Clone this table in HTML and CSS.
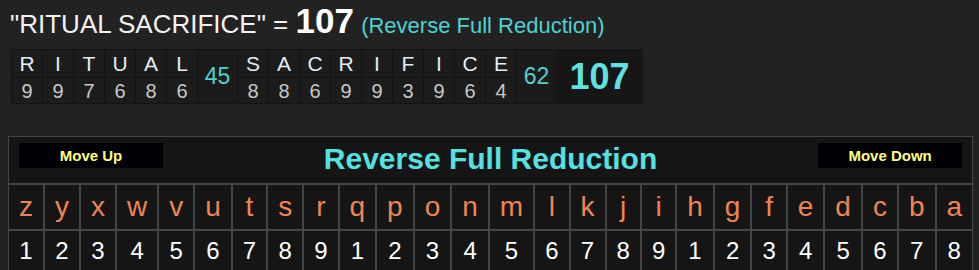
FILE: index.html
```html
<!DOCTYPE html>
<html>
<head>
<meta charset="utf-8">
<link rel="stylesheet" href="styles.css">
</head>
<body>
<div class="page">
  <div class="result"><span class="phrase">"RITUAL SACRIFICE" = </span><span class="total">107</span> <span class="cipher-name">(Reverse Full Reduction)</span></div>
  <table class="breakdown">
    <tr>
      <td class="bl">R</td><td class="bl">I</td><td class="bl">T</td><td class="bl">U</td><td class="bl">A</td><td class="bl">L</td>
      <td class="sum" rowspan="2">45</td>
      <td class="bl">S</td><td class="bl">A</td><td class="bl">C</td><td class="bl">R</td><td class="bl">I</td><td class="bl">F</td><td class="bl">I</td><td class="bl">C</td><td class="bl">E</td>
      <td class="sum" rowspan="2">62</td>
      <td class="grand" rowspan="2">107</td>
    </tr>
    <tr>
      <td class="bn">9</td><td class="bn">9</td><td class="bn">7</td><td class="bn">6</td><td class="bn">8</td><td class="bn">6</td>
      <td class="bn">8</td><td class="bn">8</td><td class="bn">6</td><td class="bn">9</td><td class="bn">9</td><td class="bn">3</td><td class="bn">9</td><td class="bn">6</td><td class="bn">4</td>
    </tr>
  </table>
  <table class="chart">
    <tr>
      <td class="head" colspan="26">
        <div class="head-inner">
          <button class="move">Move Up</button>
          <span class="title">Reverse Full Reduction</span>
          <button class="move">Move Down</button>
        </div>
      </td>
    </tr>
    <tr class="letters">
      <td>z</td><td>y</td><td>x</td><td>w</td><td>v</td><td>u</td><td>t</td><td>s</td><td>r</td><td>q</td><td>p</td><td>o</td><td>n</td><td>m</td><td>l</td><td>k</td><td>j</td><td>i</td><td>h</td><td>g</td><td>f</td><td>e</td><td>d</td><td>c</td><td>b</td><td>a</td>
    </tr>
    <tr class="numbers">
      <td>1</td><td>2</td><td>3</td><td>4</td><td>5</td><td>6</td><td>7</td><td>8</td><td>9</td><td>1</td><td>2</td><td>3</td><td>4</td><td>5</td><td>6</td><td>7</td><td>8</td><td>9</td><td>1</td><td>2</td><td>3</td><td>4</td><td>5</td><td>6</td><td>7</td><td>8</td>
    </tr>
  </table>
</div>
</body>
</html>
```
FILE: styles.css
```css
html, body {
  margin: 0;
  padding: 0;
  background: #222222;
}
body {
  font-family: "Liberation Sans", Arial, sans-serif;
  color: #f0f0f0;
  overflow: hidden;
}
.page {
  padding: 0 8px;
}
.result {
  box-sizing: border-box;
  height: 49px;
  padding: 3px 0 0 2px;
  font-size: 26px;
  line-height: 36px;
  white-space: nowrap;
}
.phrase {
  color: #f2f2f2;
}
.total {
  font-size: 35px;
  font-weight: bold;
  color: #ffffff;
}
.cipher-name {
  font-size: 22px;
  color: #4fd2d2;
}
.breakdown {
  margin-left: 3px;
  border-collapse: collapse;
  border: 1px solid #141414;
  background: #1c1c1c;
}
.breakdown td {
  border: 1px solid #141414;
  padding: 0;
  text-align: center;
}
.bl {
  width: 30px;
  height: 27px;
  font-size: 21px;
  line-height: 24px;
  color: #e2ecf4;
}
.bn {
  width: 30px;
  height: 25px;
  font-size: 20px;
  line-height: 24px;
  color: #c8c8c8;
}
.sum {
  width: 39px;
  font-size: 23px;
  color: #50d0d0;
  background: #1b1b1b;
  vertical-align: middle;
}
.grand {
  width: 85px;
  font-size: 36px;
  font-weight: bold;
  color: #5ee2e2;
  background: #161616;
  vertical-align: middle;
}
.chart {
  margin-top: 32px;
  width: 100%;
  border-collapse: separate;
  border-spacing: 0;
  background: #151515;
}
.chart td {
  border: 1px solid #454545;
  padding: 0 10px;
  text-align: center;
}
.chart td.head {
  padding: 0;
}
.head-inner {
  box-sizing: border-box;
  height: 46px;
  padding: 6px 10px 0 10px;
  display: flex;
  justify-content: space-between;
  align-items: flex-start;
}
.move {
  width: 144px;
  height: 25px;
  padding: 0;
  border: none;
  background: #000004;
  color: #ffff80;
  font-family: "Liberation Sans", Arial, sans-serif;
  font-size: 15px;
  font-weight: bold;
}
.title {
  margin-top: -1px;
  font-size: 30px;
  line-height: 34px;
  font-weight: bold;
  color: #56e0e0;
}
.letters td {
  font-size: 28px;
  line-height: 44px;
  color: #ef8550;
}
.numbers td {
  font-size: 24px;
  line-height: 40px;
  color: #ffffff;
}
```
